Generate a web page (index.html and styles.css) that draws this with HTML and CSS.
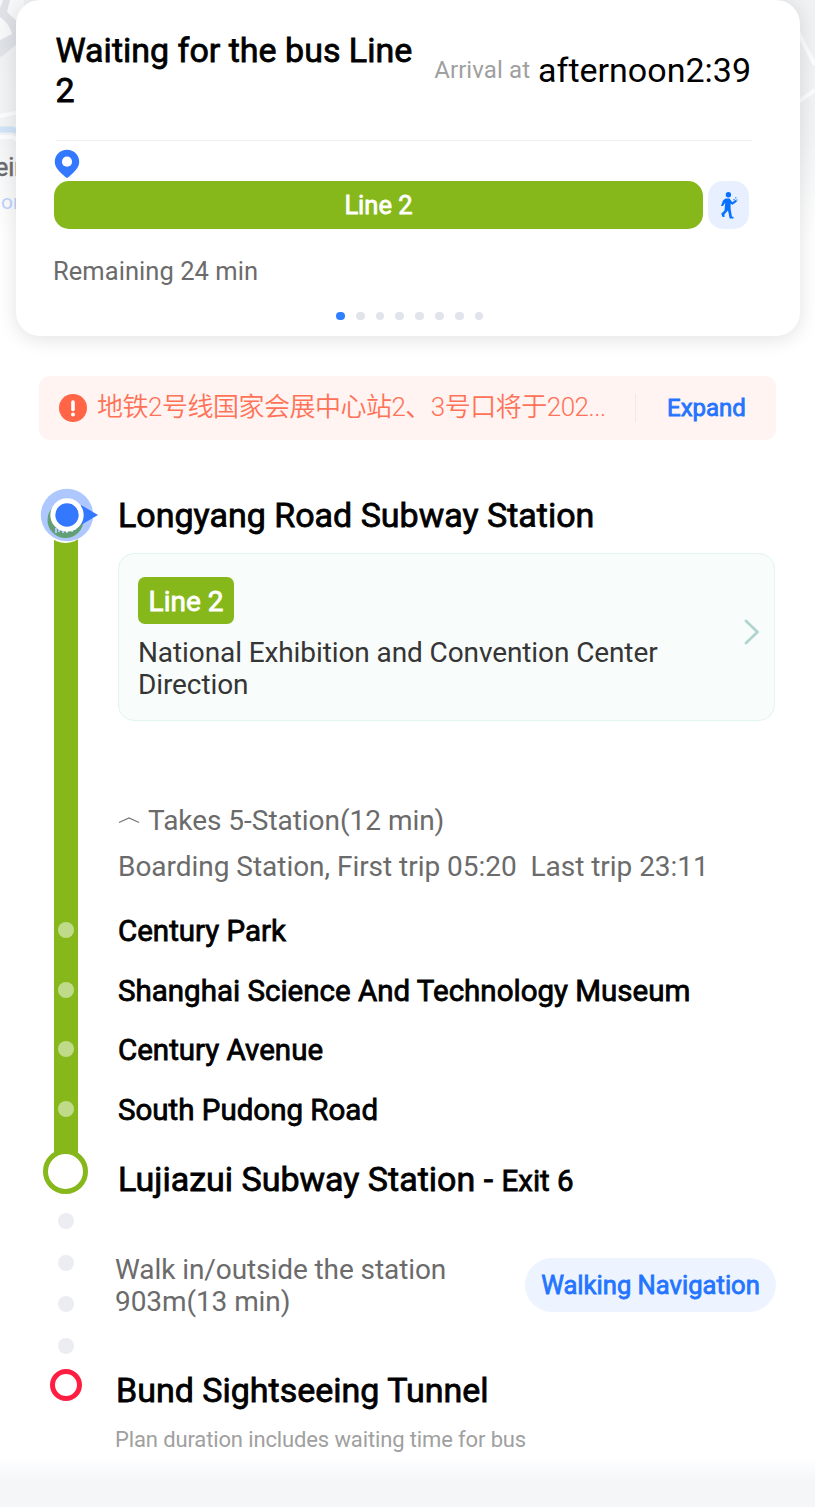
FILE: index.html
```html
<!DOCTYPE html>
<html lang="en">
<head>
<meta charset="utf-8">
<title>Route</title>
<link rel="stylesheet" href="styles.css">
</head>
<body>
<main class="page">
  <svg class="map" width="815" height="340" viewBox="0 0 815 340">
    <defs>
      <linearGradient id="fade" x1="0" y1="0" x2="0" y2="1">
        <stop offset="0" stop-color="#fff" stop-opacity="0"/>
        <stop offset=".38" stop-color="#fff" stop-opacity=".2"/>
        <stop offset=".7" stop-color="#fff" stop-opacity="1"/>
      </linearGradient>
    </defs>
    <rect width="815" height="340" fill="#eff1f3"/>
    <path d="M0 0H24V38L0 58Z" fill="#dde1e6"/>
    <path d="M0 0H3L0 8ZM10 0H24V28L7 12ZM0 17Q9 23 12 34L0 40Z" fill="#f7f8fa"/>
    <path d="M0 57L24 46V70H0Z" fill="#eff1f3"/>
    <path d="M0 116L20 112M0 137H12L20 141M798 32L815 65M798 102L815 90" fill="none" stroke="#fdfdfd" stroke-width="4"/>
    <path d="M0 129.500H12L20 132" fill="none" stroke="#c5ddf8" stroke-width="6"/>
    <rect width="815" height="340" fill="url(#fade)"/>
    <text x="-5" y="176" class="map-name">ein</text>
    <text x="1" y="209" class="map-sub">on</text>
  </svg>

  <section class="summary">
    <header class="summary-head">
      <h1 class="summary-title strong">Waiting for the bus Line<br>2</h1>
      <p class="arrival"><span class="arrival-label">Arrival at</span><span class="arrival-time">afternoon2:39</span></p>
    </header>
    <svg class="pin" width="26" height="30" viewBox="0 0 26 30"><path d="M13 .7C6 .7.8 6 .8 12.500C.8 18 4 21 7.500 24.500L12 28.500Q13 29 14 28.500L18.500 24.500C22 21 25.200 18 25.200 12.500C25.200 6 20 .7 13 .7Z" fill="#3478ff"/><circle cx="13" cy="12.700" r="5.100" fill="#fff"/></svg>
    <div class="legs">
      <div class="leg-line strong">Line 2</div>
      <div class="leg-walk">
        <svg width="18" height="28" viewBox="0 0 18 28"><circle cx="8.400" cy="3.700" r="2.700" fill="#0870ff"/><path d="M5.500 7.500H9.500L12.300 11.200L15.800 8.800L17 10.500L12.500 13.700L10.600 12.700V18L12 25.800H13.500V27.500H9.700L8 19.500L4.500 23.300V26H2.600L1.200 22.700L4.500 19.500L5.200 11.700L3 15H1L3 9.500Z" fill="#0870ff"/><path d="M13.200 8.700h1.500M15.800 6v1.500M16.300 9h1.500" stroke="#3d8cff" stroke-width="1.200"/></svg>
      </div>
    </div>
    <p class="remaining">Remaining 24 min</p>
    <div class="pager"><i class="on"></i><i></i><i></i><i></i><i></i><i></i><i></i><i></i></div>
  </section>

  <section class="notice">
    <svg width="28" height="28" viewBox="0 0 28 28"><circle cx="14" cy="14" r="14" fill="#ff6546"/><path d="M14 8v7.500" stroke="#fff" stroke-width="3.600" stroke-linecap="round"/><circle cx="14" cy="20.600" r="2" fill="#fff"/></svg>
    <p class="notice-text">地铁2号线国家会展中心站2、3号口将于202...</p>
    <a class="expand strong">Expand</a>
  </section>

  <section class="route">
    <div class="rail">
      <svg class="here" width="60" height="56" viewBox="0 0 60 56"><path d="M15 50H39V56H15Z" fill="#86b81b"/><circle cx="26.500" cy="32" r="23" fill="#fff"/><circle cx="28" cy="27" r="26.200" fill="#aec8ff"/><circle cx="26.500" cy="32" r="18" fill="#639f75"/><path d="M17 45v-5M20 44v-5M24 45v-5M28 45v-5M33 44v-5M36 42v-4" stroke="#aec8ff" stroke-width="2"/><path d="M42 17L59 27L42 37Z" fill="#3478ff"/><circle cx="28" cy="27" r="14.200" fill="#3478ff" stroke="#fff" stroke-width="5"/></svg>
      <div class="track"><i></i><i></i><i></i><i></i></div>
      <div class="ring"></div>
      <div class="walk-dots"><i></i><i></i><i></i><i></i></div>
      <div class="goal"></div>
    </div>
    <div class="steps">
      <h2 class="station first strong">Longyang Road Subway Station</h2>
      <div class="line-card">
        <div class="line-info">
          <span class="badge strong">Line 2</span>
          <p class="direction">National Exhibition and Convention Center<br>Direction</p>
        </div>
        <svg width="16" height="28" viewBox="0 0 16 28"><path d="M2 3L13.500 14L2 25" fill="none" stroke="#b0d5cf" stroke-width="2.800" stroke-linecap="round" stroke-linejoin="round"/></svg>
      </div>
      <p class="takes"><svg width="22" height="10" viewBox="0 0 22 10"><path d="M1 6.500L11 2L21 6.500" fill="none" stroke="#777" stroke-width="1.300"/></svg><span>Takes 5-Station(12 min)</span></p>
      <p class="trips">Boarding Station, First trip 05:20&nbsp; Last trip 23:11</p>
      <ul class="stops strong">
        <li>Century Park</li>
        <li>Shanghai Science And Technology Museum</li>
        <li>Century Avenue</li>
        <li>South Pudong Road</li>
      </ul>
      <h2 class="station last strong">Lujiazui Subway Station - <small>Exit 6</small></h2>
      <div class="walk">
        <p class="walk-text">Walk in/outside the station<br>903m(13 min)</p>
        <a class="walk-nav strong">Walking Navigation</a>
      </div>
      <h2 class="station goal-name strong">Bund Sightseeing Tunnel</h2>
      <p class="note">Plan duration includes waiting time for bus</p>
    </div>
  </section>
  <div class="bottom-fade"></div>
</main>
</body>
</html>
```
FILE: styles.css
```css
* { box-sizing: border-box; margin: 0; padding: 0; }
body { background: #fff; font-family: Roboto, "Noto Sans CJK SC", sans-serif; color: #000; }
h1, h2 { font-weight: 400; }
i { display: block; border-radius: 50%; }
svg { display: block; flex: none; }
.strong { -webkit-text-stroke: .8px currentColor; }
.page { position: relative; display: flex; flex-direction: column; width: 815px; height: 1507px; overflow: hidden; white-space: nowrap; }
.map { position: absolute; top: 0; left: 0; }
.map-name { font-size: 25px; fill: #6b6c6e; stroke: #6b6c6e; stroke-width: .5px; }
.map-sub { font-size: 21px; fill: #bfd2fa; }

.summary { position: relative; height: 336px; margin: 0 15px 0 16px; padding: 0 48px 0 38px; background: #fff; border-radius: 24px; box-shadow: 0 3px 20px rgba(0, 0, 0, .12); }
.summary-head { display: flex; justify-content: space-between; height: 141px; margin-left: 2px; border-bottom: 1px solid #eeeff0; }
.summary-title { padding-top: 30px; margin-left: -.5px; font-size: 34px; line-height: 40px; }
.arrival { display: flex; align-items: center; gap: 8px; height: 40px; margin-top: 50px; padding-right: 1px; line-height: 40px; }
.arrival-label { font-size: 24px; color: #a0a0a0; letter-spacing: .1px; }
.arrival-time { font-size: 34px; }
.pin { margin: 8px 0 2px -.5px; }
.legs { display: flex; gap: 5px; height: 48px; width: 695px; }
.leg-line { width: 649px; border-radius: 15px; background: #86b81b; color: #fff; text-align: center; font-size: 25.500px; line-height: 48px; }
.leg-walk { display: flex; align-items: center; justify-content: center; width: 41px; border-radius: 15px; background: #e8f0ff; }
.remaining { margin-top: 26px; margin-left: -1px; font-size: 25.500px; line-height: 32px; color: #6b6b6b; letter-spacing: .05px; }
.pager { display: flex; gap: 11px; margin: 24.500px 0 0 282px; }
.pager i { width: 8.800px; height: 8.800px; background: #e1e4ea; }
.pager .on { background: #2f80ff; }

.notice { display: flex; align-items: center; width: 737px; height: 64px; margin: 39.500px 0 0 39px; padding-left: 20px; border-radius: 11px; background: #fff4f2; }
.notice-text { flex: none; width: 548px; padding: 0 0 2px 10px; font-size: 26px; letter-spacing: -.5px; line-height: 40px; color: #ff7257; font-weight: 350; }
.expand { padding-left: 31px; border-left: 1px solid #f6e8e7; color: #2474ff; font-size: 24px; line-height: 28px; }

.route { display: flex; margin-top: 48.500px; padding-left: 39px; }
.rail { display: flex; flex-direction: column; width: 79px; }
.track { display: flex; flex-direction: column; gap: 43.700px; width: 24px; height: 612px; margin-left: 15px; padding: 378px 0 0 3.500px; background: #86b81b; }
.track i { width: 16px; height: 16px; background: #bfdb89; }
.ring { width: 45px; height: 45px; margin: -7px 0 0 4px; border: 5px solid #86b81b; border-radius: 50%; background: #fff; }
.walk-dots { display: flex; flex-direction: column; gap: 25.700px; padding: 19px 0 0 18.500px; }
.walk-dots i { width: 16px; height: 16px; background: #ecedf2; }
.goal { width: 32px; height: 32px; margin: 15px 0 0 11px; border: 5px solid #ff1e42; border-radius: 50%; }

.steps { width: 657px; }
.station { font-size: 34px; line-height: 40px; }
.first { padding-top: 7px; }
.line-card { display: flex; justify-content: space-between; height: 168px; margin-top: 17.500px; padding: 23px 14px 0 19px; border: 1px solid #e0f5ee; border-radius: 16px; background: #f8fcfb; }
.line-card > svg { margin-top: 41px; }
.badge { display: block; width: 96px; height: 47px; border-radius: 7px; background: #86b81b; color: #fff; text-align: center; font-size: 28px; line-height: 49px; }
.direction { margin-top: 13px; font-size: 28px; line-height: 32.500px; color: #353535; letter-spacing: -.1px; }
.takes { display: flex; align-items: center; gap: 8px; margin-top: 80px; font-size: 28px; line-height: 40px; color: #6b6b6b; letter-spacing: -.03px; }
.trips { margin-top: 6px; font-size: 28px; line-height: 40px; color: #6b6b6b; letter-spacing: -.03px; }
.stops { list-style: none; margin-top: 15.500px; font-size: 29.500px; line-height: 59.500px; }
.last { margin-top: 18.500px; }
.last small { font-size: 29.500px; }
.walk { display: flex; justify-content: space-between; margin: 53px 0 0 -3px; width: 661px; }
.walk-text { font-size: 28px; line-height: 32.500px; color: #6b6b6b; letter-spacing: -.08px; }
.walk-nav { width: 251px; height: 54px; margin-top: 4px; border-radius: 27px; background: #edf4ff; color: #2474ff; text-align: center; font-size: 25.600px; line-height: 54px; }
.goal-name { margin: 51px 0 0 -2px; }
.note { margin: 15px 0 0 -3px; font-size: 22px; line-height: 30px; color: #a0a0a0; letter-spacing: -.13px; }
.bottom-fade { position: absolute; left: 0; bottom: 0; width: 815px; height: 50px; background: linear-gradient(#fff, #f4f6f8 50%); }
```
